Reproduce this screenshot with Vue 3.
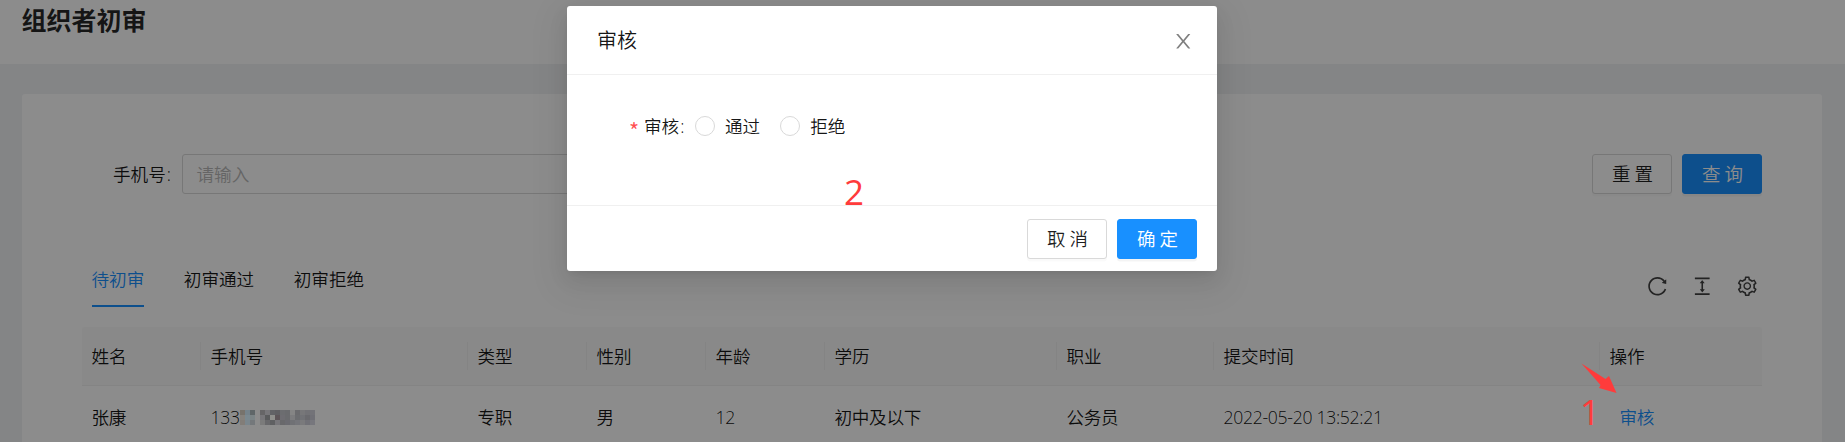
<script setup>
const tabs = ['待初审', '初审通过', '初审拒绝']
const columns = ['姓名', '手机号', '类型', '性别', '年龄', '学历', '职业', '提交时间', '操作']
const row = ['张康', '133', '专职', '男', '12', '初中及以下', '公务员', '2022-05-20 13:52:21']

const icons = {
  reload:
    'M909.1 209.3l-56.4 44.1C775.8 155.1 656.2 92 521.9 92 290 92 102.3 279.5 102 511.5 101.7 743.7 289.8 932 521.9 932c181.3 0 335.8-115 394.6-276.1 1.5-4.2-.7-8.9-4.9-10.3l-56.7-19.5a8 8 0 00-10.1 4.8c-1.8 5-3.8 10-5.9 14.9-17.3 41-42.1 77.8-73.7 109.4A344.77 344.77 0 01655.9 829c-42.3 17.9-87.4 27-133.8 27-46.5 0-91.5-9.1-133.8-27A341.5 341.5 0 01279 755.2a342.16 342.16 0 01-73.7-109.4c-17.9-42.4-27-87.4-27-133.9s9.1-91.5 27-133.9c17.3-41 42.1-77.8 73.7-109.4 31.6-31.6 68.4-56.4 109.3-73.8 42.3-17.9 87.4-27 133.8-27 46.5 0 91.5 9.1 133.8 27a341.5 341.5 0 01109.3 73.8c9.9 9.9 19.2 20.4 27.8 31.4l-60.2 47a8 8 0 003 14.1l175.6 43c5 1.2 9.9-2.6 9.9-7.7l.8-180.9c-.1-6.6-7.8-10.3-13-6.2z',
  density:
    'M840 836H184c-4.4 0-8 3.6-8 8v60c0 4.4 3.6 8 8 8h656c4.4 0 8-3.6 8-8v-60c0-4.4-3.6-8-8-8zm0-724H184c-4.4 0-8 3.6-8 8v60c0 4.4 3.6 8 8 8h656c4.4 0 8-3.6 8-8v-60c0-4.4-3.6-8-8-8zM610.8 378c6 0 9.4-7 5.7-11.7L515.7 238.7a7.14 7.14 0 00-11.3 0L403.6 366.3a7.23 7.23 0 005.7 11.7H476v268h-62.8c-6 0-9.4 7-5.7 11.7l100.8 127.5c2.9 3.7 8.5 3.7 11.3 0l100.8-127.5c3.7-4.7.4-11.7-5.7-11.7H548V378h62.8z',
  setting:
    'M924.8 625.7l-65.5-56c3.1-19 4.7-38.4 4.7-57.8s-1.6-38.8-4.7-57.8l65.5-56a32.03 32.03 0 009.3-35.2l-.9-2.6a443.74 443.74 0 00-79.7-137.9l-1.8-2.1a32.12 32.12 0 00-35.1-9.5l-81.3 28.9c-30-24.6-63.5-44-99.7-57.6l-15.7-85a32.05 32.05 0 00-25.8-25.7l-2.7-.5c-52.1-9.4-106.9-9.4-159 0l-2.7.5a32.05 32.05 0 00-25.8 25.7l-15.8 85.4a351.86 351.86 0 00-99 57.4l-81.9-29.1a32 32 0 00-35.1 9.5l-1.8 2.1a446.02 446.02 0 00-79.7 137.9l-.9 2.6c-4.5 12.5-.8 26.5 9.3 35.2l66.3 56.6c-3.1 18.8-4.6 38-4.6 57.1 0 19.2 1.5 38.4 4.6 57.1L99 625.5a32.03 32.03 0 00-9.3 35.2l.9 2.6c18.1 50.4 44.9 96.9 79.7 137.9l1.8 2.1a32.12 32.12 0 0035.1 9.5l81.9-29.1c29.8 24.5 63.1 43.9 99 57.4l15.8 85.4a32.05 32.05 0 0025.8 25.7l2.7.5a449.4 449.4 0 00159 0l2.7-.5a32.05 32.05 0 0025.8-25.7l15.7-85a350 350 0 0099.7-57.6l81.3 28.9a32 32 0 0035.1-9.5l1.8-2.1c34.8-41.1 61.6-87.5 79.7-137.9l.9-2.6c4.5-12.3.8-26.3-9.3-35zM788.3 465.9c2.5 15.1 3.8 30.6 3.8 46.1s-1.3 31-3.8 46.1l-6.6 40.1 74.7 63.9a370.03 370.03 0 01-42.6 73.6L721 702.8l-31.4 25.8c-23.9 19.6-50.5 35-79.3 45.8l-38.1 14.3-17.9 97a377.5 377.5 0 01-85 0l-17.9-97.2-37.8-14.5c-28.5-10.8-55-26.2-78.7-45.7l-31.4-25.9-93.4 33.2c-17-22.9-31.2-47.6-42.6-73.6l75.5-64.5-6.5-40c-2.4-14.9-3.7-30.3-3.7-45.5 0-15.3 1.2-30.6 3.7-45.5l6.5-40-75.5-64.5c11.3-26.1 25.6-50.7 42.6-73.6l93.4 33.2 31.4-25.9c23.7-19.5 50.2-34.9 78.7-45.7l37.9-14.3 17.9-97.2c28.1-3.2 56.8-3.2 85 0l17.9 97 38.1 14.3c28.7 10.8 55.4 26.2 79.3 45.8l31.4 25.8 92.8-32.9c17 22.9 31.2 47.6 42.6 73.6L781.8 426l6.5 39.9zM512 326c-97.2 0-176 78.8-176 176s78.8 176 176 176 176-78.8 176-176-78.8-176-176-176zm79.2 255.2A111.6 111.6 0 01512 614c-29.9 0-58-11.7-79.2-32.8A111.6 111.6 0 01400 502c0-29.9 11.7-58 32.8-79.2C454 401.6 482.1 390 512 390c29.9 0 58 11.6 79.2 32.8A111.6 111.6 0 01624 502c0 29.9-11.7 58-32.8 79.2z',
}

// Pixelated cover over the hidden digits, 5px cells, one array per line.
const mosaic = [
  ['#77736c', '#75838b', '#5f6668', '', '#666567', '#77767a', '#626366', '#5f5f62', '#6c6d70', '#6a6b6e', '#858585', '#6b6b6e', '#777779', '#727276', '#737378'],
  ['#85827d', '#7a8990', '#7b8486', '', '#77767a', '#5a5b5d', '#8f908c', '#5d5558', '#6e6d72', '#6a6b6e', '#7c7c7e', '#6c6d70', '#717276', '#6a6a6e', '#707076'],
  ['#827d78', '#7a868d', '#74787b', '', '#7b7b7b', '#68686b', '#5f6062', '#77767a', '#68686b', '#6a6a70', '#707175', '#74757a', '#7a7a7c', '#717177', '#77777d'],
]
</script>

<template>
  <div class="screen">
    <div class="page">
      <header class="page-header"><h1>组织者初审</h1></header>
      <main class="card">
        <div class="search">
          <label class="label">手机号<i>:</i></label>
          <div class="input">请输入</div>
          <div class="actions">
            <button class="btn">重置</button>
            <button class="btn primary">查询</button>
          </div>
        </div>
        <div class="toolbar">
          <nav class="tabs">
            <a v-for="(t, i) in tabs" :key="t" class="tab" :class="{ active: i === 0 }">{{ t }}</a>
          </nav>
          <div class="tools">
            <svg v-for="(d, name) in icons" :key="name" viewBox="0 0 1024 1024"><path :d="d" /></svg>
          </div>
        </div>
        <div class="table">
          <div class="tr head">
            <div v-for="c in columns" :key="c" class="th">{{ c }}</div>
          </div>
          <div class="tr">
            <div v-for="c in row" :key="c" class="td">{{ c }}</div>
            <div class="td"><a class="link">审核</a></div>
          </div>
        </div>
      </main>
    </div>

    <div class="mask">
      <section class="modal">
        <header class="modal-head">
          <span>审核</span>
          <svg viewBox="0 0 1024 1024">
            <path d="M563.8 512l262.5-312.9c4.4-5.2.7-13.1-6.1-13.1h-79.8c-4.7 0-9.2 2.1-12.3 5.7L511.6 449.8 295.1 191.7c-3-3.6-7.5-5.7-12.3-5.7H203c-6.8 0-10.5 7.9-6.1 13.1L459.4 512 196.9 824.9A7.95 7.95 0 00203 838h79.8c4.7 0 9.2-2.1 12.3-5.7l216.5-258.1 216.5 258.1c3 3.6 7.5 5.7 12.3 5.7h79.8c6.8 0 10.5-7.9 6.1-13.1L563.8 512z" />
          </svg>
        </header>
        <div class="modal-body">
          <span class="star">*</span>
          <span class="modal-label">审核<i>:</i></span>
          <label class="radio"><b></b>通过</label>
          <label class="radio"><b></b>拒绝</label>
        </div>
        <footer class="modal-foot">
          <button class="btn">取消</button>
          <button class="btn primary">确定</button>
        </footer>
      </section>
    </div>

    <svg class="mosaic" viewBox="0 0 75 15" shape-rendering="crispEdges">
      <g v-for="(line, y) in mosaic" :key="y">
        <template v-for="(c, x) in line" :key="x">
          <rect v-if="c" :x="x * 5" :y="y * 5" width="5" height="5" :fill="c" />
        </template>
      </g>
    </svg>
    <svg class="arrow" viewBox="0 0 36 31"><path d="M0.5 0.5L24.5 16L28 13L35.5 30L18 25L19.5 22Z" /></svg>
    <span class="mark one">1</span>
    <span class="mark two">2</span>
  </div>
</template>

<style>
body {
  margin: 0;
}
</style>

<style scoped>
.screen {
  position: relative;
  width: 1845px;
  height: 442px;
  overflow: hidden;
  background: #f0f2f5;
  font-family: 'Open Sans', 'Noto Sans CJK SC', sans-serif;
  font-size: 17.6px;
  font-weight: 350;
  line-height: 28px;
  color: rgba(0, 0, 0, 0.92);
}
.screen * {
  box-sizing: border-box;
}
i,
b {
  font-style: normal;
}
.page-header {
  height: 64px;
  padding: 0 21.5px;
  background: #fff;
}
h1 {
  margin: 0;
  font-size: 25px;
  font-weight: 700;
  line-height: 40px;
  color: rgba(0, 0, 0, 0.85);
}
.card {
  margin: 30px 23px 0 22px;
  height: 400px;
  padding: 60px 60px 0;
  background: #fff;
  border-radius: 3px;
}
.search {
  display: flex;
  align-items: center;
  height: 40px;
}
.label {
  width: 100px;
  padding-left: 31px;
  white-space: nowrap;
}
.label i,
.modal-label i {
  margin-left: 1px;
}
.input {
  width: 460px;
  height: 40px;
  padding: 0 13.5px;
  border: 1px solid #d9d9d9;
  border-radius: 3px;
  line-height: 38px;
  color: #b8b8b8;
}
.actions {
  display: flex;
  gap: 10px;
  margin-left: auto;
}
.btn {
  width: 80px;
  height: 40px;
  padding: 0 0 0 5px;
  border: 1px solid #d9d9d9;
  border-radius: 3px;
  background: #fff;
  box-shadow: 0 2.5px 0 rgba(0, 0, 0, 0.02);
  font: inherit;
  font-size: 18.5px;
  letter-spacing: 4px;
  line-height: 38px;
  color: rgba(0, 0, 0, 0.88);
  white-space: nowrap;
}
.primary {
  border-color: #1890ff;
  background: #1890ff;
  box-shadow: 0 2.5px 0 rgba(0, 0, 0, 0.045);
  color: #fff;
}
.toolbar {
  display: flex;
  justify-content: space-between;
  align-items: flex-start;
  height: 133px;
  padding: 64px 4px 0 9.5px;
}
.tabs {
  display: flex;
  gap: 39.5px;
}
.tab {
  height: 49px;
  padding-top: 7px;
}
.active {
  color: #1890ff;
  border-bottom: 2px solid #1890ff;
}
.tools {
  display: flex;
  gap: 22.5px;
  padding-top: 16.5px;
}
.tools svg {
  width: 22.5px;
  height: 22.5px;
  fill: rgba(0, 0, 0, 0.75);
}
.tr {
  display: grid;
  grid-template-columns: 119px 267px 119px 119px 119px 232px 157px 386px 162px;
  align-items: center;
  height: 62px;
}
.head {
  height: 59px;
  background: #fafafa;
  border-bottom: 1px solid #f0f0f0;
  border-radius: 3px 3px 0 0;
}
.th,
.td {
  padding-left: 9.5px;
  white-space: nowrap;
}
.td {
  letter-spacing: -0.3px;
}
.th {
  border-right: 1px solid #f0f0f0;
}
.th:last-child {
  border-right: 0;
}
.link {
  margin-left: 10px;
  color: #1890ff;
}
.mask {
  position: absolute;
  inset: 0;
  padding-top: 6px;
  padding-left: 567px;
  background: rgba(0, 0, 0, 0.45);
}
.modal {
  width: 650px;
  height: 265px;
  display: flex;
  flex-direction: column;
  background: #fff;
  border-radius: 3px;
  box-shadow: 0 4px 8px -5px rgba(0, 0, 0, 0.12), 0 8px 20px rgba(0, 0, 0, 0.08),
    0 11px 35px 10px rgba(0, 0, 0, 0.05);
}
.modal-head {
  display: flex;
  align-items: center;
  justify-content: space-between;
  height: 69px;
  padding: 2px 23px 0 30px;
  border-bottom: 1px solid #f0f0f0;
  font-size: 20px;
}
.modal-head svg {
  width: 22.5px;
  height: 22.5px;
  fill: rgba(0, 0, 0, 0.5);
}
.modal-body {
  display: flex;
  align-items: center;
  height: 130px;
  padding: 0 0 28px 62px;
}
.star {
  width: 15px;
  padding-top: 8px;
  color: #ff4d4f;
  font-family: 'Noto Sans CJK SC', sans-serif;
  font-size: 22px;
}
.modal-label {
  width: 51px;
  white-space: nowrap;
}
.radio {
  display: flex;
  align-items: center;
  gap: 10px;
  margin-right: 20px;
}
.radio b {
  width: 20px;
  height: 20px;
  border: 1px solid #d9d9d9;
  border-radius: 50%;
}
.modal-foot {
  display: flex;
  flex: 1;
  justify-content: flex-end;
  gap: 10px;
  padding: 13px 20px 0;
  border-top: 1px solid #f0f0f0;
}
.mosaic {
  position: absolute;
  left: 240px;
  top: 410px;
  width: 75px;
  height: 15px;
}
.arrow {
  position: absolute;
  left: 1581px;
  top: 363px;
  width: 36px;
  height: 31px;
  fill: #ff3b3b;
}
.mark {
  position: absolute;
  font-size: 35px;
  font-weight: 400;
  line-height: 40px;
  color: #ff3b3b;
}
.one {
  left: 1580px;
  top: 392px;
}
.two {
  left: 844px;
  top: 172px;
}
</style>
